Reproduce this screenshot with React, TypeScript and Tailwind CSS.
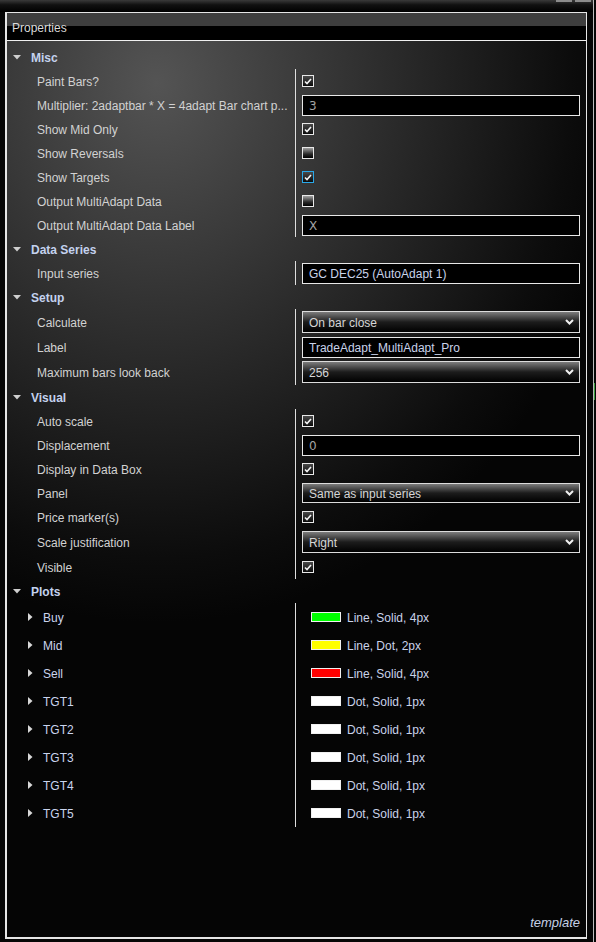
import React from 'react';

type Row =
  | { kind: 'check'; label: string; checked: boolean; focus?: boolean }
  | { kind: 'text'; label: string; value: string; mono?: boolean }
  | { kind: 'select'; label: string; value: string; tall?: boolean };

interface Section {
  title: string;
  rows: Row[];
}

const sections: Section[] = [
  {
    title: 'Misc',
    rows: [
      { kind: 'check', label: 'Paint Bars?', checked: true },
      { kind: 'text', label: 'Multiplier: 2adaptbar * X = 4adapt Bar chart p...', value: '3', mono: true },
      { kind: 'check', label: 'Show Mid Only', checked: true },
      { kind: 'check', label: 'Show Reversals', checked: false },
      { kind: 'check', label: 'Show Targets', checked: true, focus: true },
      { kind: 'check', label: 'Output MultiAdapt Data', checked: false },
      { kind: 'text', label: 'Output MultiAdapt Data Label', value: 'X', mono: true },
    ],
  },
  {
    title: 'Data Series',
    rows: [{ kind: 'text', label: 'Input series', value: 'GC DEC25 (AutoAdapt 1)' }],
  },
  {
    title: 'Setup',
    rows: [
      { kind: 'select', label: 'Calculate', value: 'On bar close', tall: true },
      { kind: 'text', label: 'Label', value: 'TradeAdapt_MultiAdapt_Pro' },
      { kind: 'select', label: 'Maximum bars look back', value: '256', tall: true },
    ],
  },
  {
    title: 'Visual',
    rows: [
      { kind: 'check', label: 'Auto scale', checked: true },
      { kind: 'text', label: 'Displacement', value: '0', mono: true },
      { kind: 'check', label: 'Display in Data Box', checked: true },
      { kind: 'select', label: 'Panel', value: 'Same as input series' },
      { kind: 'check', label: 'Price marker(s)', checked: true },
      { kind: 'select', label: 'Scale justification', value: 'Right', tall: true },
      { kind: 'check', label: 'Visible', checked: true },
    ],
  },
];

const plots = [
  { name: 'Buy', color: 'bg-[#00ff00]', desc: 'Line, Solid, 4px' },
  { name: 'Mid', color: 'bg-[#ffff00]', desc: 'Line, Dot, 2px' },
  { name: 'Sell', color: 'bg-[#ff0000]', desc: 'Line, Solid, 4px' },
  { name: 'TGT1', color: 'bg-white', desc: 'Dot, Solid, 1px' },
  { name: 'TGT2', color: 'bg-white', desc: 'Dot, Solid, 1px' },
  { name: 'TGT3', color: 'bg-white', desc: 'Dot, Solid, 1px' },
  { name: 'TGT4', color: 'bg-white', desc: 'Dot, Solid, 1px' },
  { name: 'TGT5', color: 'bg-white', desc: 'Dot, Solid, 1px' },
];

const DownTri = () => (
  <svg width="8" height="5" viewBox="0 0 8 5">
    <path d="M0 0H8L4 4.5Z" fill="#cfcfcf" />
  </svg>
);

const RightTri = () => (
  <svg width="5" height="8" viewBox="0 0 5 8">
    <path d="M0 0V8L4.5 4Z" fill="#d8d8d8" />
  </svg>
);

const Chevron = () => (
  <svg width="9" height="6" viewBox="0 0 9 6">
    <path d="M1 1L4.5 4.5L8 1" fill="none" stroke="#f0f0f0" strokeWidth="2" />
  </svg>
);

const CheckBox = ({ checked, focus }: { checked: boolean; focus?: boolean }) => (
  <div
    className={`w-[12px] h-[12px] border flex items-center justify-center ${
      focus ? 'border-[#2aa8e8]' : 'border-[#e8e8e8]'
    } ${
      checked
        ? 'bg-[linear-gradient(to_bottom,#4a4a4a,#0a0a0a)]'
        : 'bg-[linear-gradient(to_bottom,#a0a0a0,#2a2a2a_60%,#000)]'
    }`}
  >
    {checked && (
      <svg width="8" height="7" viewBox="0 0 8 7">
        <path d="M1 3.5L3 5.5L7 1" fill="none" stroke="#f4f4f4" strokeWidth="1.6" />
      </svg>
    )}
  </div>
);

const Value = ({ row }: { row: Row }) => {
  if (row.kind === 'check') return <CheckBox checked={row.checked} focus={row.focus} />;
  if (row.kind === 'text')
    return (
      <div className="w-[278px] h-[21px] bg-black border border-[#e8e8e8] flex items-center pl-[6px] pt-[2px]">
        {row.mono ? (
          <span className="font-['DejaVu_Sans',sans-serif] text-[12px] text-[#a4a4a4]">{row.value}</span>
        ) : (
          <span className="text-[#c9d3ea]">{row.value}</span>
        )}
      </div>
    );
  return (
    <div
      className={`w-[278px] ${row.tall ? 'h-[22px]' : 'h-[20px]'} border border-[#dcdcdc] bg-[linear-gradient(to_bottom,#7c7c7c,#1c1c1c_50%,#000)] flex items-center justify-between pl-[6px] pr-[5px]`}
    >
      <span className="text-[#d6d6d6] pt-[2px]">{row.value}</span>
      <Chevron />
    </div>
  );
};

const SectionHeader = ({ title }: { title: string }) => (
  <div className="h-[24px] flex items-center pl-[6px]">
    <DownTri />
    <span className="ml-[10px] pt-[2px] font-bold text-[#c4d2ee]">{title}</span>
  </div>
);

export default function App() {
  return (
    <div className="w-[596px] h-[942px] bg-[#060606] overflow-hidden flex font-['Liberation_Sans',Arial,sans-serif] text-[12px] leading-none">
      <div className="flex flex-col">
        {/* top strip */}
        <div className="h-[12px] w-[593px] bg-[linear-gradient(to_bottom,#3a3a3a,#111_40%,#000)] flex justify-end items-start pr-[2px] gap-[3px]">
          <div className="w-[16px] h-[2px] bg-[#8c8c8c]" />
          <div className="w-[16px] h-[2px] bg-[#8c8c8c]" />
        </div>

        {/* properties frame */}
        <div className="ml-[5px] w-[582px] h-[927px] border border-[#e6e6e6] border-l-2 border-b-2 flex flex-col bg-[radial-gradient(ellipse_470px_540px_at_150px_70px,#545454_0%,#2f2f2f_45%,#0c0c0c_88%,#050505_100%)]">
          <div className="h-[28px] shrink-0 border-b border-[#f0f0f0] bg-[linear-gradient(to_bottom,#3e3e3e_0%,#3e3e3e_48%,#000_48%,#000_100%)] flex items-center pl-[5px]">
            <span className="text-[#dadada] pt-[2px]">Properties</span>
          </div>

          <div className="flex-1 pt-[4px] flex flex-col">
            {sections.map((s) => (
              <div key={s.title}>
                <SectionHeader title={s.title} />
                {s.rows.map((r) => (
                  <div
                    key={r.label}
                    className={`grid grid-cols-[288px_1fr] ${
                      r.kind === 'select' && r.tall ? 'h-[26px]' : 'h-[24px]'
                    }`}
                  >
                    <div className="flex items-center pl-[30px] pt-[2px] text-[#d2d2d2] whitespace-nowrap overflow-hidden">
                      {r.label}
                    </div>
                    <div className="border-l border-[#dedede] flex items-center pl-[6px]">
                      <Value row={r} />
                    </div>
                  </div>
                ))}
              </div>
            ))}

            <SectionHeader title="Plots" />
            {plots.map((p) => (
              <div key={p.name} className="grid grid-cols-[288px_1fr] h-[28px]">
                <div className="flex items-center pl-[21px]">
                  <RightTri />
                  <span className="ml-[10px] pt-[2px] text-[#cad4ee]">{p.name}</span>
                </div>
                <div className="border-l border-[#dedede] flex items-center pl-[15px]">
                  <div className={`w-[30px] h-[10px] border border-[#f0f0f0] ${p.color}`} />
                  <span className="ml-[6px] pt-[2px] text-[#cad3ea]">{p.desc}</span>
                </div>
              </div>
            ))}

            <div className="flex-1 flex items-end justify-end pr-[6px] pb-[8px]">
              <span className="italic text-[#c6d0e6] text-[13px]">template</span>
            </div>
          </div>
        </div>
      </div>
      <div className="w-[1px] h-full bg-[#bdbdbd]" />
      <div className="flex-1 flex flex-col">
        <div className="h-[383px]" />
        <div className="w-[1px] h-[17px] bg-[#3a9a3a]" />
      </div>
    </div>
  );
}
